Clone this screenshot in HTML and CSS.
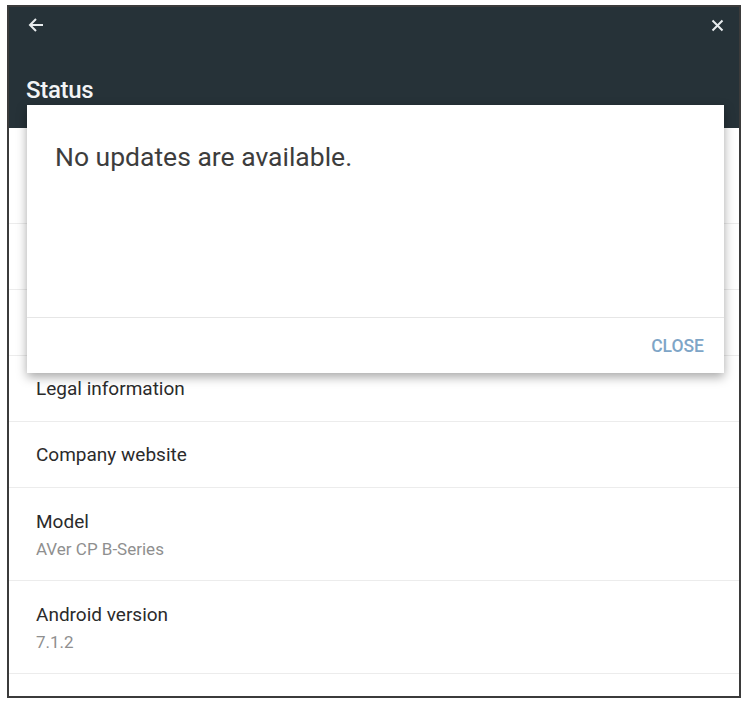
FILE: index.html
```html
<!DOCTYPE html>
<html lang="en">
<head>
    <meta charset="UTF-8">
    <meta name="viewport" content="width=device-width, initial-scale=1.0">
    <title>Status</title>
    <link rel="stylesheet" href="styles.css">
</head>
<body>
    <div class="screen">
        <!-- App bar -->
        <div class="appbar">
            <div class="toolbar">
                <svg class="icon" width="16" height="16" viewBox="0 0 16 16">
                    <path d="M15 8H2M8 2L2 8l6 6" fill="none" stroke="#e8ecee" stroke-width="2"/>
                </svg>
                <svg class="icon" width="13" height="13" viewBox="0 0 13 13">
                    <path d="M1.5 1.5l10 10M11.5 1.5l-10 10" fill="none" stroke="#e8ecee" stroke-width="2"/>
                </svg>
            </div>
            <div class="appbar-title">Status</div>
        </div>

        <!-- Settings list (top rows sit under the dialog) -->
        <div class="list">
            <div class="list-item two-line"></div>
            <div class="list-item"></div>
            <div class="list-item"></div>
            <div class="list-item">
                <div class="item-title">Legal information</div>
            </div>
            <div class="list-item">
                <div class="item-title">Company website</div>
            </div>
            <div class="list-item two-line">
                <div class="item-title">Model</div>
                <div class="item-summary">AVer CP B-Series</div>
            </div>
            <div class="list-item two-line">
                <div class="item-title">Android version</div>
                <div class="item-summary">7.1.2</div>
            </div>
        </div>

        <!-- Dialog -->
        <div class="dialog">
            <div class="dialog-message">No updates are available.</div>
            <div class="dialog-actions">
                <button class="dialog-btn">CLOSE</button>
            </div>
        </div>
    </div>
</body>
</html>
```

FILE: styles.css
```css
* {
    margin: 0;
    padding: 0;
    box-sizing: border-box;
}

body {
    font-family: Roboto, "Noto Sans", sans-serif;
    background: #ffffff;
}

.screen {
    position: relative;
    margin: 5px 0 0 7px;
    width: 734px;
    height: 693px;
    border: 2px solid #3b3b3b;
    overflow: hidden;
    background: #ffffff;
}

/* App bar */
.appbar {
    background: #263238;
    height: 121px;
    padding: 0 15px 0 19px;
    display: flex;
    flex-direction: column;
}

.toolbar {
    display: flex;
    justify-content: space-between;
    align-items: center;
    height: 34px;
    padding-top: 2px;
}

.appbar-title {
    margin-top: 35px;
    margin-left: -2px;
    color: #f2f4f5;
    font-size: 24px;
    font-weight: 500;
    letter-spacing: -0.3px;
}

/* List */
.list {
    padding-top: 3px;
}

.list-item {
    height: 66px;
    padding: 0 27px;
    display: flex;
    flex-direction: column;
    justify-content: center;
    border-bottom: 1px solid #ececec;
}

.list-item.two-line {
    height: 93px;
}

.item-title {
    font-size: 19px;
    color: #2b2b2b;
}

.item-summary {
    margin-top: 6px;
    font-size: 17px;
    color: #8f8f8f;
}

/* Dialog */
.dialog {
    position: absolute;
    left: 18px;
    top: 98px;
    width: 697px;
    height: 268px;
    background: #ffffff;
    box-shadow: 0 4px 10px rgba(0, 0, 0, 0.35);
    display: flex;
    flex-direction: column;
}

.dialog-message {
    flex: 1;
    padding: 36px 28px 0;
    font-size: 26.5px;
    color: #3d3d3d;
    border-bottom: 1px solid #e6e6e6;
}

.dialog-actions {
    height: 55px;
    display: flex;
    justify-content: flex-end;
    align-items: center;
    padding-right: 20px;
}

.dialog-btn {
    background: none;
    border: none;
    font-family: inherit;
    font-size: 17.5px;
    font-weight: 500;
    color: #7ea5c7;
}
```
